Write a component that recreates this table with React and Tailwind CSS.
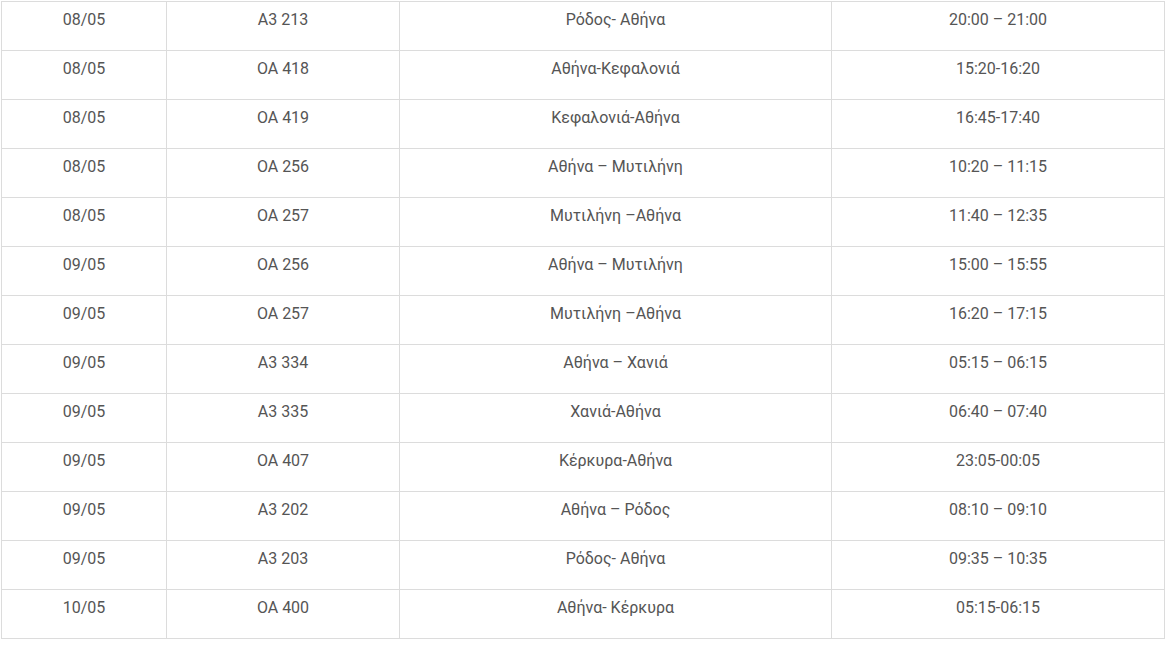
const flights = [
  ["08/05", "A3 213", "Ρόδος- Αθήνα", "20:00 – 21:00"],
  ["08/05", "OA 418", "Αθήνα-Κεφαλονιά", "15:20-16:20"],
  ["08/05", "OA 419", "Κεφαλονιά-Αθήνα", "16:45-17:40"],
  ["08/05", "OA 256", "Αθήνα – Μυτιλήνη", "10:20 – 11:15"],
  ["08/05", "OA 257", "Μυτιλήνη –Αθήνα", "11:40 – 12:35"],
  ["09/05", "OA 256", "Αθήνα – Μυτιλήνη", "15:00 – 15:55"],
  ["09/05", "OA 257", "Μυτιλήνη –Αθήνα", "16:20 – 17:15"],
  ["09/05", "A3 334", "Αθήνα – Χανιά", "05:15 – 06:15"],
  ["09/05", "A3 335", "Χανιά-Αθήνα", "06:40 – 07:40"],
  ["09/05", "OA 407", "Κέρκυρα-Αθήνα", "23:05-00:05"],
  ["09/05", "A3 202", "Αθήνα – Ρόδος", "08:10 – 09:10"],
  ["09/05", "A3 203", "Ρόδος- Αθήνα", "09:35 – 10:35"],
  ["10/05", "OA 400", "Αθήνα- Κέρκυρα", "05:15-06:15"],
];

export default function App() {
  return (
    <div className="min-h-[668px] w-full bg-white pt-[1px] pl-[1px]" style={{ fontFamily: "Roboto, 'Noto Sans', sans-serif" }}>
      {/* flights table */}
      <div className="w-[1164px] border-t border-l border-[#dcdcdc]">
        {flights.map((row, i) => (
          <div key={i} className="grid h-[49px] grid-cols-[165px_233px_432px_333px] border-b border-[#dcdcdc]">
            {row.map((cell, j) => (
              <div key={j} className="border-r border-[#dcdcdc] pt-[6px] text-center text-[16px] leading-[24px] text-[#555]">
                {cell}
              </div>
            ))}
          </div>
        ))}
      </div>
    </div>
  );
}
